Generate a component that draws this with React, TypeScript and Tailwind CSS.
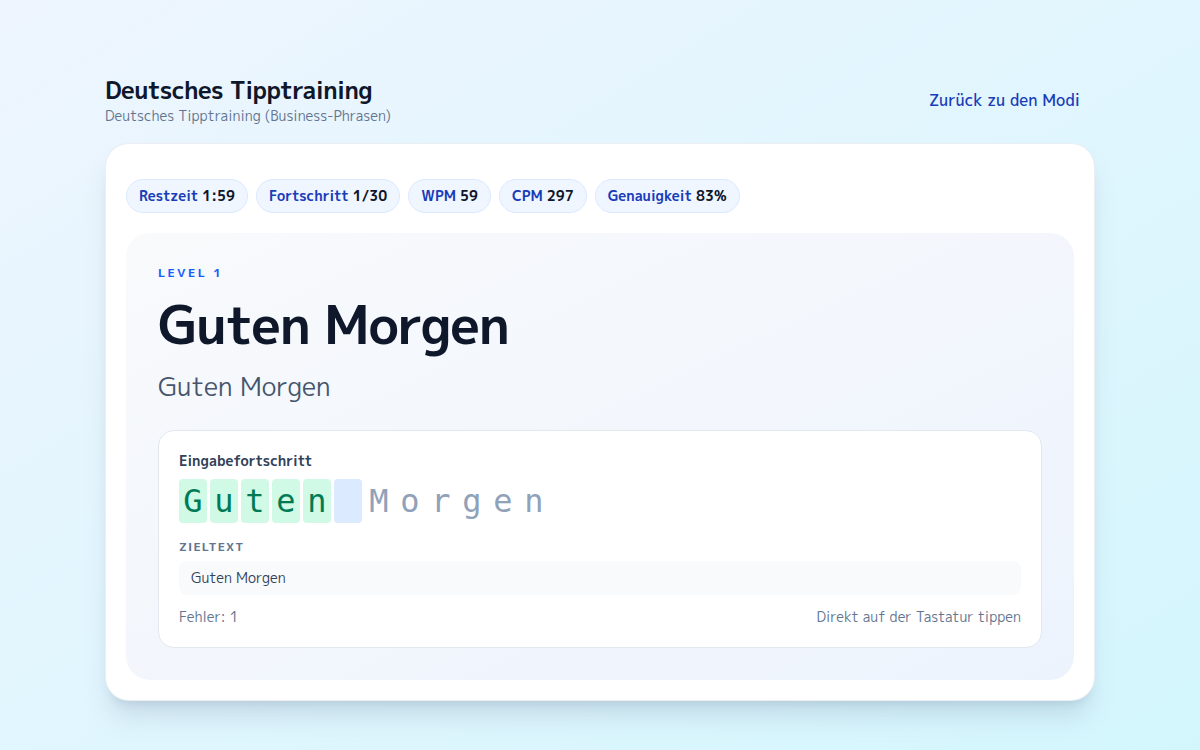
import React from "react";

const stats = [
  { label: "Restzeit", value: "1:59" },
  { label: "Fortschritt", value: "1/30" },
  { label: "WPM", value: "59" },
  { label: "CPM", value: "297" },
  { label: "Genauigkeit", value: "83%" },
];

const target = "Guten Morgen";
const typed = 5;

export default function App() {
  return (
    <main
      className="min-h-screen w-full bg-gradient-to-br from-[#eef5fe] to-[#d3f6fd] text-slate-900"
      style={{ fontFamily: '"M PLUS 1p", "Noto Sans CJK JP", sans-serif' }}
    >
      <div className="mx-auto w-[990px] pt-[74px]">
        {/* Header */}
        <header className="flex items-center justify-between pb-[17px]">
          <div>
            <h1 className="text-[24px] font-bold leading-[32px] tracking-tight text-slate-900">Deutsches Tipptraining</h1>
            <p className="text-sm leading-[20px] text-slate-500">Deutsches Tipptraining (Business-Phrasen)</p>
          </div>
          <a className="pr-[15px] text-base font-medium text-blue-800">Zurück zu den Modi</a>
        </header>

        {/* Card */}
        <section className="rounded-[24px] border border-slate-200/70 bg-white p-5 pt-[35px] shadow-xl shadow-slate-400/30">
          <div className="flex gap-2">
            {stats.map((s) => (
              <div
                key={s.label}
                className="flex h-[34px] items-center gap-1 rounded-full border border-blue-100 bg-blue-50 px-3 text-sm"
              >
                <span className="font-semibold text-blue-800">{s.label}</span>
                <span className="font-bold text-slate-900">{s.value}</span>
              </div>
            ))}
          </div>

          <div className="mt-[20px] rounded-[24px] bg-gradient-to-br from-slate-50 to-[#edf3fd] px-8 pb-8 pt-8">
            <div className="text-xs font-bold leading-4 tracking-[0.2em] text-blue-600">LEVEL 1</div>
            <h2 className="mt-[12px] text-[52px] font-bold leading-[64px] tracking-tight text-slate-900">Guten Morgen</h2>
            <p className="mt-[12px] text-[25.5px] leading-[36px] text-slate-600">Guten Morgen</p>

            <div className="mt-[25px] rounded-2xl border border-slate-200 bg-white px-5 pb-5 pt-[20px]">
              <div className="text-sm font-semibold text-slate-700">Eingabefortschritt</div>
              <div
                className="mt-[8px] flex gap-[3px]"
                style={{ fontFamily: '"DejaVu Sans Mono", monospace' }}
              >
                {target.split("").map((ch, i) => {
                  const cls =
                    i < typed
                      ? "bg-emerald-100 text-emerald-700"
                      : i === typed
                      ? "bg-blue-100 text-slate-400"
                      : "text-slate-400";
                  return (
                    <span
                      key={i}
                      className={`flex h-11 w-7 items-center justify-center rounded-[4px] text-[32px] ${cls}`}
                    >
                      {ch === " " ? "\u00a0" : ch}
                    </span>
                  );
                })}
              </div>
              <div className="mt-[16px] text-xs font-semibold tracking-[0.1em] text-slate-500">ZIELTEXT</div>
              <div className="mt-[6px] rounded-lg bg-slate-50 px-3 py-[7px] text-sm text-slate-700">{target}</div>
              <div className="mt-[12px] flex justify-between text-sm text-slate-500">
                <span>Fehler: 1</span>
                <span>Direkt auf der Tastatur tippen</span>
              </div>
            </div>
          </div>
        </section>
      </div>
    </main>
  );
}
